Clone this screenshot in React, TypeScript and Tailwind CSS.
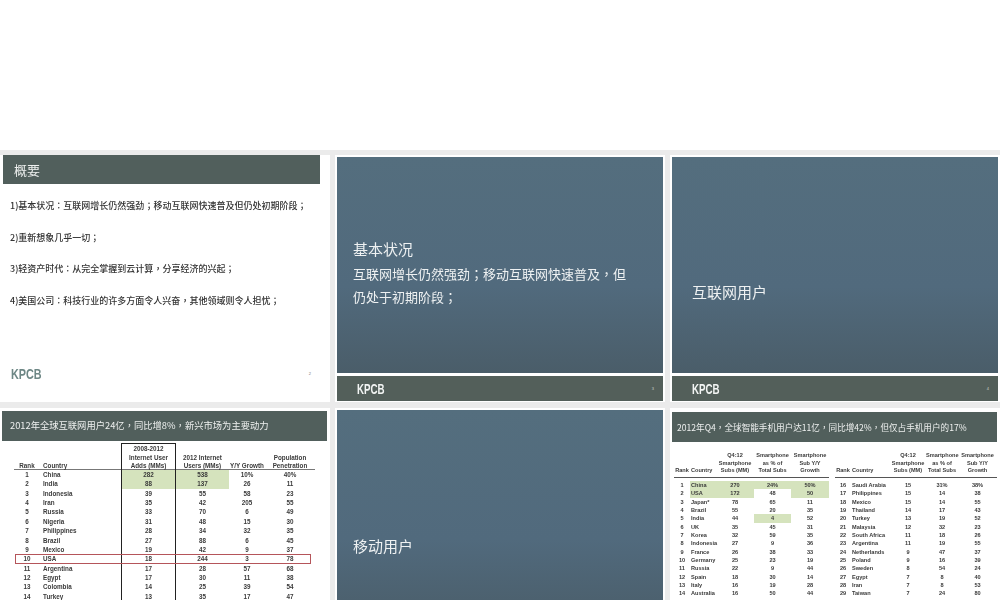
import React from "react";

const cjk = "font-['Noto_Sans_CJK_SC','Noto_Sans',sans-serif]";

function Z({ t }: { t: string }) {
  return (
    <>
      {t.split(/([：；，])/).map((s, i) =>
        i % 2 === 1 ? (
          <span key={i} className="font-['Noto_Sans_CJK_TC',sans-serif] leading-none">{s}</span>
        ) : (
          <React.Fragment key={i}>{s}</React.Fragment>
        ),
      )}
    </>
  );
}

type Row1 = [string, string, string, string, string, string];
const t1: Row1[] = [
  ["1","China","282","538","10%","40%"],["2","India","88","137","26","11"],["3","Indonesia","39","55","58","23"],
  ["4","Iran","35","42","205","55"],["5","Russia","33","70","6","49"],["6","Nigeria","31","48","15","30"],
  ["7","Philippines","28","34","32","35"],["8","Brazil","27","88","6","45"],["9","Mexico","19","42","9","37"],
  ["10","USA","18","244","3","78"],["11","Argentina","17","28","57","68"],["12","Egypt","17","30","11","38"],
  ["13","Colombia","14","25","39","54"],["14","Turkey","13","35","17","47"],
];
type Row2 = [string, string, string, string, string];
const t2a: Row2[] = [
  ["1","China","270","24%","50%"],["2","USA","172","48","50"],["3","Japan*","78","65","11"],["4","Brazil","55","20","35"],
  ["5","India","44","4","52"],["6","UK","35","45","31"],["7","Korea","32","59","35"],["8","Indonesia","27","9","36"],
  ["9","France","26","38","33"],["10","Germany","25","23","19"],["11","Russia","22","9","44"],["12","Spain","18","30","14"],
  ["13","Italy","16","19","28"],["14","Australia","16","50","44"],
];
const t2b: Row2[] = [
  ["16","Saudi Arabia","15","31%","38%"],["17","Philippines","15","14","38"],["18","Mexico","15","14","55"],["19","Thailand","14","17","43"],
  ["20","Turkey","13","19","52"],["21","Malaysia","12","32","23"],["22","South Africa","11","18","26"],["23","Argentina","11","19","55"],
  ["24","Netherlands","9","47","37"],["25","Poland","9","16","39"],["26","Sweden","8","54","24"],["27","Egypt","7","8","40"],
  ["28","Iran","7","8","53"],["29","Taiwan","7","24","80"],
];

function Logo({ light }: { light?: boolean }) {
  return (
    <span className={`block origin-left font-['Liberation_Sans',sans-serif] text-[15px] leading-[15px] font-bold blur-[0.3px] ${light ? "scale-x-[0.65] text-[#f2f4f3]" : "scale-x-[0.72] text-[#6d8785]"}`}>
      KPCB
    </span>
  );
}

function Panel({ children, pt }: { children: React.ReactNode; pt: string }) {
  return (
    <div className={`h-[216px] shrink-0 bg-gradient-to-b from-[#546e7e] via-[#516a7d] via-60% to-[#4a5d69] pl-[16px] text-[#eef1f2] ${cjk} blur-[0.25px] ${pt}`}>
      {children}
    </div>
  );
}

function Cover({ children, pt, n }: { children: React.ReactNode; pt: string; n: string }) {
  return (
    <div className="flex h-[247px] flex-col gap-[3px] bg-white p-[2px] pb-[1px]">
      <Panel pt={pt}>{children}</Panel>
      <div className="flex h-[25px] shrink-0 items-center justify-between bg-[#535f5a] pr-[9px] pl-[20px]">
        <Logo light />
        <span className="font-['Liberation_Sans',sans-serif] text-[4px] text-[#c9cfcd]">{n}</span>
      </div>
    </div>
  );
}

function Table1() {
  const cols = "grid grid-cols-[26px_81px_55px_53px_36px_50px] items-center";
  return (
    <div className="relative ml-[14px] w-[301px] pt-[4px] font-['Liberation_Sans',sans-serif] text-[6.3px] font-bold text-[#3a3a3a] blur-[0.3px]">
      <div className={`${cols} h-[25px] items-end border-b border-[#777] pb-[2px] text-center leading-[8.6px]`}>
        <span>Rank</span>
        <span className="pl-[3px] text-left">Country</span>
        <span>2008-2012<br />Internet User<br />Adds (MMs)</span>
        <span>2012 Internet<br />Users (MMs)</span>
        <span>Y/Y Growth</span>
        <span>Population<br />Penetration</span>
      </div>
      {t1.map((r, i) => (
        <div key={r[0]} className={`${cols} h-[9.36px] text-center leading-[9.36px]`}>
          <span>{r[0]}</span>
          <span className="pl-[3px] text-left">{r[1]}</span>
          <span className={i < 2 ? "bg-[#d5e3bd]" : ""}>{r[2]}</span>
          <span className={i < 2 ? "bg-[#d5e3bd]" : ""}>{r[3]}</span>
          <span>{r[4]}</span>
          <span>{r[5]}</span>
        </div>
      ))}
      <div className="absolute top-[2px] left-[107px] h-[170px] w-[55px] border border-[#222]" />
      <div className="absolute top-[113px] left-[1px] h-[10px] w-[296px] border border-[#b5555a]" />
    </div>
  );
}

function SubTable({ rows, cols, hi }: { rows: Row2[]; cols: string; hi?: boolean }) {
  return (
    <div className="flex flex-col whitespace-nowrap">
      <div className={`${cols} h-[26px] items-end border-b border-[#555] pb-[2px] text-center leading-[7.6px]`}>
        <span>Rank</span>
        <span className="pl-[1px] text-left">Country</span>
        <span>Q4:12<br />Smartphone<br />Subs (MM)</span>
        <span>Smartphone<br />as % of<br />Total Subs</span>
        <span>Smartphone<br />Sub Y/Y<br />Growth</span>
      </div>
      <div className="h-[3px]" />
      {rows.map((r, i) => {
        const g = "bg-[#d5e3bd]";
        const a = hi && i < 2;
        const c3 = hi && (i === 0 || i === 4);
        return (
          <div key={r[0]} className={`${cols} h-[8.33px] text-center leading-[8.33px]`}>
            <span>{r[0]}</span>
            <span className={`pl-[1px] text-left ${a ? g : ""}`}>{r[1]}</span>
            <span className={a ? g : ""}>{r[2]}</span>
            <span className={c3 ? g : ""}>{r[3]}</span>
            <span className={a ? g : ""}>{r[4]}</span>
          </div>
        );
      })}
    </div>
  );
}

function Table2() {
  return (
    <div className="flex gap-[6px] pt-[10px] pl-[2px] font-['Liberation_Sans',sans-serif] text-[5.6px] font-bold text-[#3a3a3a] blur-[0.3px]">
      <div className="w-[155px]"><SubTable hi rows={t2a} cols="grid grid-cols-[16px_26px_38px_37px_38px] items-center" /></div>
      <div className="w-[162px]"><SubTable rows={t2b} cols="grid grid-cols-[16px_39px_36px_32px_39px] items-center" /></div>
    </div>
  );
}

export default function App() {
  return (
    <div className="h-[600px] w-[1000px] overflow-hidden bg-white">
      <div className="h-[150px]" />
      <div className="grid h-[450px] grid-cols-[330px_330px_330px] content-start gap-x-[5px] gap-y-[6px] bg-[#ebebeb] pt-[5px]">
        <div className="flex h-[247px] flex-col bg-white">
          <div className={`ml-[3px] flex h-[29px] w-[317px] items-center bg-[#515f5c] pl-[11px] text-[13px] text-[#eef0ef] blur-[0.25px] ${cjk}`}>概要</div>
          <div className={`flex h-[176px] flex-col gap-[16.5px] pt-[14px] pl-[10px] text-[9px] leading-[15px] font-medium text-[#333] blur-[0.35px] ${cjk}`}>
            <p><Z t="1)基本状况：互联网增长仍然强劲；移动互联网快速普及但仍处初期阶段；" /></p>
            <p><Z t="2)重新想象几乎一切；" /></p>
            <p><Z t="3)轻资产时代：从完全掌握到云计算，分享经济的兴起；" /></p>
            <p><Z t="4)美国公司：科技行业的许多方面令人兴奋，其他领域则令人担忧；" /></p>
          </div>
          <div className="flex items-center justify-between pt-[6px] pr-[19px] pl-[11px]">
            <Logo />
            <span className="font-['Liberation_Sans',sans-serif] text-[4px] text-[#777]">2</span>
          </div>
        </div>

        <Cover pt="pt-[81px]" n="3">
          <p className="mb-[2px] text-[15px] leading-[22px]">基本状况</p>
          <p className="w-[280px] text-[13px] leading-[23px]"><Z t="互联网增长仍然强劲；移动互联网快速普及，但仍处于初期阶段；" /></p>
        </Cover>

        <Cover pt="pt-[124px]" n="4">
          <p className="pl-[4px] text-[15px] leading-[22px]">互联网用户</p>
        </Cover>

        <div className="flex h-[247px] flex-col bg-white">
          <div className={`mt-[3px] ml-[2px] flex h-[30px] w-[325px] shrink-0 items-center bg-[#515f5c] pl-[8px] text-[9.3px] whitespace-nowrap text-[#eef0ef] blur-[0.25px] ${cjk}`}>
            <span><Z t="2012年全球互联网用户24亿，同比增8%，新兴市场为主要动力" /></span>
          </div>
          <Table1 />
        </div>

        <div className="h-[192px] bg-white p-[2px] pb-0">
          <Panel pt="pt-[125px]">
            <p className="text-[15px] leading-[22px]">移动用户</p>
          </Panel>
        </div>

        <div className="flex h-[247px] flex-col bg-white pl-[2px]">
          <div className={`mt-[4px] flex h-[30px] w-[325px] shrink-0 items-center bg-[#515f5c] pl-[5px] text-[8.6px] whitespace-nowrap text-[#eef0ef] blur-[0.25px] ${cjk}`}>
            <span><Z t="2012年Q4，全球智能手机用户达11亿，同比增42%，但仅占手机用户的17%" /></span>
          </div>
          <Table2 />
        </div>
      </div>
    </div>
  );
}
